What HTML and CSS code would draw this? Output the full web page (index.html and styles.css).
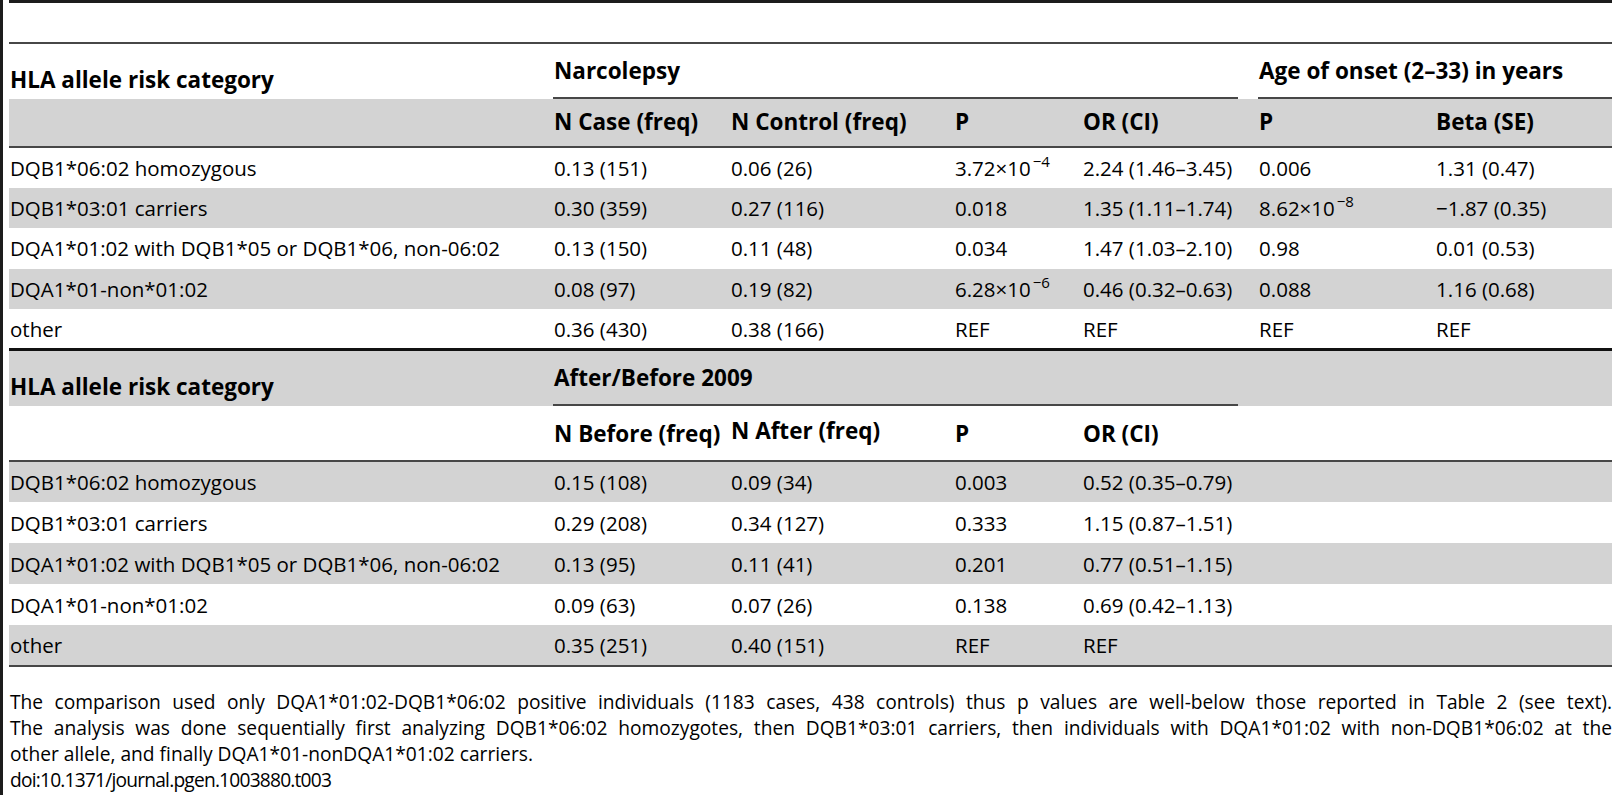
FILE: index.html
```html
<!DOCTYPE html>
<html lang="en">
<head>
    <meta charset="UTF-8">
    <title>Table 3</title>
    <link rel="stylesheet" href="styles.css">
</head>
<body>
    <div class="page">
        <div class="topbar"></div>
        <table class="hla">
            <colgroup>
                <col class="c-cat">
                <col class="c-case">
                <col class="c-ctrl">
                <col class="c-p">
                <col class="c-or">
                <col class="c-p2">
                <col class="c-beta">
            </colgroup>
            <tr class="head-1">
                <th class="cat">HLA allele risk category</th>
                <th colspan="4" class="group"><div class="group-line gap">Narcolepsy</div></th>
                <th colspan="2" class="group"><div class="group-line">Age of onset (2–33) in years</div></th>
            </tr>
            <tr class="head-2 shade rule">
                <th></th>
                <th>N Case (freq)</th>
                <th>N Control (freq)</th>
                <th>P</th>
                <th>OR (CI)</th>
                <th>P</th>
                <th>Beta (SE)</th>
            </tr>
            <tr class="row">
                <td class="label">DQB1*06:02 homozygous</td>
                <td>0.13 (151)</td>
                <td>0.06 (26)</td>
                <td>3.72×10<sup>−4</sup></td>
                <td>2.24 (1.46–3.45)</td>
                <td>0.006</td>
                <td>1.31 (0.47)</td>
            </tr>
            <tr class="row shade">
                <td class="label">DQB1*03:01 carriers</td>
                <td>0.30 (359)</td>
                <td>0.27 (116)</td>
                <td>0.018</td>
                <td>1.35 (1.11–1.74)</td>
                <td>8.62×10<sup>−8</sup></td>
                <td>−1.87 (0.35)</td>
            </tr>
            <tr class="row">
                <td class="label">DQA1*01:02 with DQB1*05 or DQB1*06, non-06:02</td>
                <td>0.13 (150)</td>
                <td>0.11 (48)</td>
                <td>0.034</td>
                <td>1.47 (1.03–2.10)</td>
                <td>0.98</td>
                <td>0.01 (0.53)</td>
            </tr>
            <tr class="row shade">
                <td class="label">DQA1*01-non*01:02</td>
                <td>0.08 (97)</td>
                <td>0.19 (82)</td>
                <td>6.28×10<sup>−6</sup></td>
                <td>0.46 (0.32–0.63)</td>
                <td>0.088</td>
                <td>1.16 (0.68)</td>
            </tr>
            <tr class="row">
                <td class="label">other</td>
                <td>0.36 (430)</td>
                <td>0.38 (166)</td>
                <td>REF</td>
                <td>REF</td>
                <td>REF</td>
                <td>REF</td>
            </tr>
            <tr class="head-1 shade heavy">
                <th class="cat">HLA allele risk category</th>
                <th colspan="4" class="group"><div class="group-line gap">After/Before 2009</div></th>
                <th colspan="2"></th>
            </tr>
            <tr class="head-2 tall rule">
                <th></th>
                <th>N Before (freq)</th>
                <th class="raised">N After (freq)</th>
                <th>P</th>
                <th>OR (CI)</th>
                <th colspan="2"></th>
            </tr>
            <tr class="row low shade">
                <td class="label">DQB1*06:02 homozygous</td>
                <td>0.15 (108)</td>
                <td>0.09 (34)</td>
                <td>0.003</td>
                <td>0.52 (0.35–0.79)</td>
                <td colspan="2"></td>
            </tr>
            <tr class="row low">
                <td class="label">DQB1*03:01 carriers</td>
                <td>0.29 (208)</td>
                <td>0.34 (127)</td>
                <td>0.333</td>
                <td>1.15 (0.87–1.51)</td>
                <td colspan="2"></td>
            </tr>
            <tr class="row low shade">
                <td class="label">DQA1*01:02 with DQB1*05 or DQB1*06, non-06:02</td>
                <td>0.13 (95)</td>
                <td>0.11 (41)</td>
                <td>0.201</td>
                <td>0.77 (0.51–1.15)</td>
                <td colspan="2"></td>
            </tr>
            <tr class="row low">
                <td class="label">DQA1*01-non*01:02</td>
                <td>0.09 (63)</td>
                <td>0.07 (26)</td>
                <td>0.138</td>
                <td>0.69 (0.42–1.13)</td>
                <td colspan="2"></td>
            </tr>
            <tr class="row low shade last">
                <td class="label">other</td>
                <td>0.35 (251)</td>
                <td>0.40 (151)</td>
                <td>REF</td>
                <td>REF</td>
                <td colspan="2"></td>
            </tr>
        </table>
        <div class="notes">
            <p>
                <span class="line full">The comparison used only DQA1*01:02-DQB1*06:02 positive individuals (1183 cases, 438 controls) thus p values are well-below those reported in Table 2 (see text).</span>
                <span class="line full">The analysis was done sequentially first analyzing DQB1*06:02 homozygotes, then DQB1*03:01 carriers, then individuals with DQA1*01:02 with non-DQB1*06:02 at the</span>
                <span class="line">other allele, and finally DQA1*01-nonDQA1*01:02 carriers.</span>
            </p>
            <p class="doi">doi:10.1371/journal.pgen.1003880.t003</p>
        </div>
    </div>
</body>
</html>
```

FILE: styles.css
```css
body {
    margin: 0;
    font-family: "Open Sans", "DejaVu Sans", sans-serif;
    color: #000;
    background: #fff;
    overflow: hidden;
}

.page {
    border-left: 3px solid #1c1c1c;
    padding-left: 6px;
    height: 795px;
}

.topbar {
    border-top: 3px solid #1c1c1c;
    height: 39px;
}

.hla {
    width: 100%;
    table-layout: fixed;
    border-collapse: collapse;
    border-top: 2px solid #474747;
    font-size: 20.5px;
}

.c-cat { width: 544px; }
.c-case { width: 177px; }
.c-ctrl { width: 224px; }
.c-p { width: 128px; }
.c-or { width: 176px; }
.c-p2 { width: 177px; }
.c-beta { width: 177px; }

th, td {
    padding: 0 0 0 1px;
    text-align: left;
    vertical-align: middle;
    white-space: nowrap;
}

th {
    font-weight: bold;
    font-size: 22.5px;
}

.shade {
    background: #d3d3d3;
}

.head-1 {
    height: 55px;
}

.head-1 .cat {
    padding-top: 16px;
}

.head-1 .group {
    vertical-align: bottom;
    padding-left: 0;
}

.group-line {
    border-bottom: 2px solid #474747;
    height: 53px;
    line-height: 53px;
    padding-left: 1px;
}

.group-line.gap {
    margin-right: 20px;
}

.head-2 {
    height: 48px;
}

.head-2 th {
    padding-bottom: 3px;
}

.head-2.tall {
    height: 55px;
}

.head-2.tall th {
    padding-bottom: 0;
}

.head-2 .raised {
    vertical-align: top;
    padding-top: 9px;
}

.rule {
    border-bottom: 2px solid #474747;
}

.heavy {
    border-top: 3px solid #111;
}

.row {
    height: 40.6px;
}

.row.low {
    height: 41px;
}

.row.last {
    border-bottom: 2px solid #474747;
}

sup {
    font-size: 15px;
    vertical-align: 9px;
    line-height: 0;
    margin-left: 2px;
}

.notes {
    margin-top: 22px;
    font-size: 19.2px;
    line-height: 25.7px;
}

.notes p {
    margin: 0;
    padding-left: 1px;
}

.notes .line {
    display: block;
    white-space: nowrap;
}

.notes .line.full {
    text-align: justify;
    text-align-last: justify;
}

.notes .doi {
    letter-spacing: -0.8px;
}
```
